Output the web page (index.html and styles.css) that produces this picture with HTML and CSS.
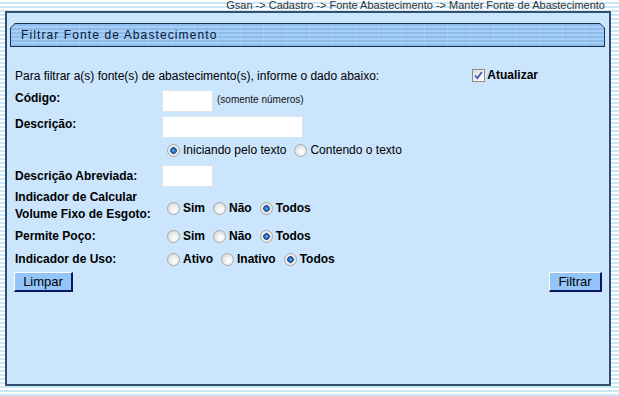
FILE: index.html
```html
<!DOCTYPE html>
<html lang="pt-BR">
<head>
    <meta charset="UTF-8">
    <title>Filtrar Fonte de Abastecimento</title>
    <link rel="stylesheet" href="styles.css">
</head>
<body>
    <div class="breadcrumb">Gsan -&gt; Cadastro -&gt; Fonte Abastecimento -&gt; Manter Fonte de Abastecimento</div>

    <div class="panel">
        <div class="title-bar">
            <div class="title-inner">Filtrar Fonte de Abastecimento</div>
        </div>

        <form class="form" onsubmit="return false">
            <!-- instrução + atualizar -->
            <div class="row intro">
                <span>Para filtrar a(s) fonte(s) de abastecimento(s), informe o dado abaixo:</span>
                <label class="refresh">
                    <span class="check">
                        <svg width="11" height="11" viewBox="0 0 11 11"><path d="M2.2 5.6 L4.4 8.2 L8.8 2" fill="none" stroke="#3b55b3" stroke-width="1.7"/></svg>
                    </span>
                    Atualizar
                </label>
            </div>

            <div class="row field">
                <label class="label top" for="codigo">Código:</label>
                <input type="text" id="codigo" class="text short">
                <span class="hint">(somente números)</span>
            </div>

            <div class="row field">
                <label class="label top" for="descricao">Descrição:</label>
                <input type="text" id="descricao" class="text long">
            </div>

            <div class="row match">
                <span class="label"></span>
                <label class="opt plain"><input type="radio" name="tipo" class="radio" checked>Iniciando pelo texto</label>
                <label class="opt plain"><input type="radio" name="tipo" class="radio">Contendo o texto</label>
            </div>

            <div class="row field abrev">
                <label class="label" for="abreviada">Descrição Abreviada:</label>
                <input type="text" id="abreviada" class="text short">
            </div>

            <div class="row volume">
                <span class="label two-lines">Indicador de Calcular<br>Volume Fixo de Esgoto:</span>
                <div class="opts low">
                    <label class="opt"><input type="radio" name="volume" class="radio">Sim</label>
                    <label class="opt"><input type="radio" name="volume" class="radio">Não</label>
                    <label class="opt"><input type="radio" name="volume" class="radio" checked>Todos</label>
                </div>
            </div>

            <div class="row small">
                <span class="label">Permite Poço:</span>
                <div class="opts">
                    <label class="opt"><input type="radio" name="poco" class="radio">Sim</label>
                    <label class="opt"><input type="radio" name="poco" class="radio">Não</label>
                    <label class="opt"><input type="radio" name="poco" class="radio" checked>Todos</label>
                </div>
            </div>

            <div class="row small">
                <span class="label">Indicador de Uso:</span>
                <div class="opts">
                    <label class="opt"><input type="radio" name="uso" class="radio">Ativo</label>
                    <label class="opt"><input type="radio" name="uso" class="radio">Inativo</label>
                    <label class="opt"><input type="radio" name="uso" class="radio" checked>Todos</label>
                </div>
            </div>

            <div class="row actions">
                <button type="reset" class="btn limpar">Limpar</button>
                <button type="submit" class="btn filtrar">Filtrar</button>
            </div>
        </form>
    </div>
</body>
</html>
```

FILE: styles.css
```css
/* geral */
* {
    box-sizing: border-box;
}

body {
    margin: 0;
    font-family: "Liberation Sans", Arial, sans-serif;
    font-size: 12px;
    color: #000;
    background: repeating-linear-gradient(to bottom, #ffffff 0, #ffffff 2px, #cbe7f7 2px, #cbe7f7 4px);
    height: 396px;
    overflow: hidden;
}

.breadcrumb {
    height: 11px;
    line-height: 11px;
    font-size: 11px;
    color: #333;
    text-align: right;
    padding-right: 14px;
    white-space: nowrap;
}

.panel {
    margin-left: 5px;
    width: 606px;
    height: 375px;
    border: 2px solid #30506e;
    background: #cbe5fd;
    padding: 10px 4px 0 3px;
}

/* barra de título com cantos chanfrados */
.title-bar {
    height: 24px;
    background: #1c2f4e;
    clip-path: polygon(5px 0, calc(100% - 5px) 0, 100% 5px, 100% 100%, 0 100%, 0 5px);
    padding: 1px;
}

.title-inner {
    height: 22px;
    line-height: 22px;
    padding-left: 10px;
    color: #0a1836;
    letter-spacing: 1.1px;
    background:
        repeating-linear-gradient(to right, transparent 0, transparent 22px, rgba(255, 255, 255, 0.12) 22px, rgba(255, 255, 255, 0.12) 23px),
        repeating-linear-gradient(to bottom, #8dbcec 0, #8dbcec 2px, #a7cff5 2px, #a7cff5 4px);
    clip-path: polygon(4px 0, calc(100% - 4px) 0, 100% 4px, 100% 100%, 0 100%, 0 4px);
}

.form {
    padding: 0 3px 0 5px;
}

.row {
    display: flex;
    align-items: center;
}

.intro {
    margin-top: 19px;
    height: 20px;
}

.field {
    margin-top: 4px;
    height: 22px;
}

.abrev {
    margin-top: 5px;
}

.match {
    margin-top: 2px;
    height: 20px;
}

.volume {
    margin-top: 2px;
    height: 34px;
}

.small {
    margin-top: 3px;
    height: 20px;
}

.actions {
    margin-top: 3px;
    height: 20px;
    justify-content: space-between;
}

.label {
    width: 147px;
    flex-shrink: 0;
    font-weight: bold;
    line-height: 14px;
}

.label.top {
    align-self: flex-start;
    padding-top: 1px;
}

.two-lines {
    line-height: 17px;
}

.refresh {
    display: flex;
    align-items: center;
    margin-left: auto;
    margin-right: 64px;
    font-weight: bold;
    margin-top: -2px;
}

.check {
    width: 13px;
    height: 13px;
    margin-right: 2px;
    border: 1px solid #8c8c8c;
    background: linear-gradient(135deg, #dcdcdc, #ffffff);
    display: flex;
    align-items: center;
    justify-content: center;
}

.text {
    height: 22px;
    border: 1px solid #dbe5ee;
    background: #fff;
    padding: 1px 3px;
    font-family: inherit;
    font-size: 12px;
    outline: none;
}

.short {
    width: 51px;
}

.long {
    width: 141px;
}

.hint {
    align-self: flex-start;
    font-size: 10px;
    margin-left: 4px;
    margin-top: 4px;
    color: #111;
}

.opts {
    display: flex;
    align-items: center;
}

.opts.low {
    padding-top: 4px;
}

.opt {
    display: flex;
    align-items: center;
    font-weight: bold;
    margin-right: 3px;
}

.opt.plain {
    font-weight: normal;
}

.radio {
    appearance: none;
    -webkit-appearance: none;
    width: 13px;
    height: 13px;
    margin: 0 3px 0 5px;
    border: 1px solid #a8a8a8;
    border-radius: 50%;
    background: radial-gradient(circle at 60% 65%, #ffffff 0, #f2f2f2 35%, #cfcfcf 100%);
}

.radio:checked {
    background: radial-gradient(circle at 50% 50%, #7cc0f4 0, #2a74c8 1.5px, #1d4f8e 3px, #dcdcdc 3.6px, #f0f0f0 4.5px, #cccccc 100%);
}

.btn {
    height: 20px;
    padding: 0;
    font-family: inherit;
    font-size: 13px;
    color: #000;
    background: #93c5f8;
    border-style: solid;
    border-width: 1px 2px 2px 1px;
    border-color: #ffffff #0b1660 #0b1660 #ffffff;
    cursor: pointer;
}

.limpar {
    width: 59px;
    margin-left: -1px;
}

.filtrar {
    width: 53px;
}
```
